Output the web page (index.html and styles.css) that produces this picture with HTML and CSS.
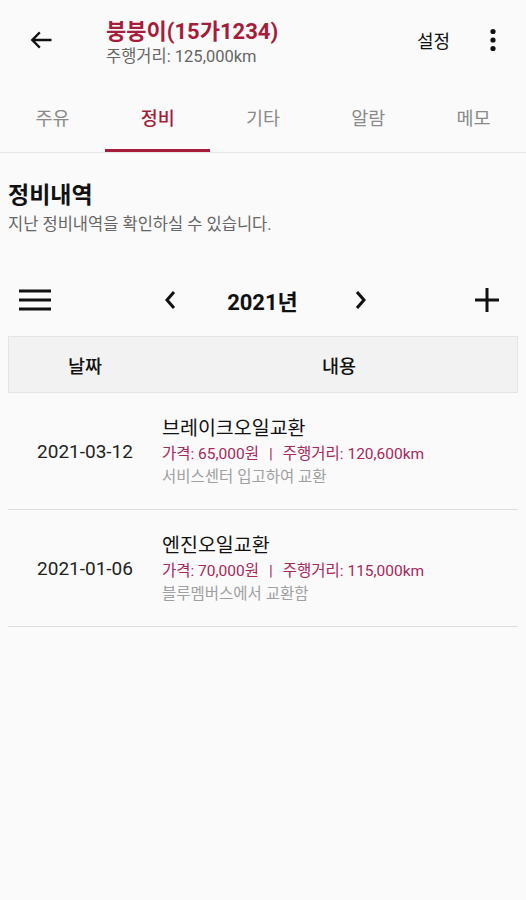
FILE: index.html
```html
<!DOCTYPE html>
<html>
<head>
    <title>정비</title>
    <meta charset="utf-8" />
    <link rel="stylesheet" href="styles.css">
</head>
<body>
    <div class="topbar">
        <div class="back">
            <svg width="28" height="28" viewBox="0 0 24 24"><path d="M21 12H4.5M11 5.5L4.5 12l6.5 6.5" fill="none" stroke="#111" stroke-width="2"/></svg>
        </div>
        <div class="car">
            <div class="car-name">붕붕이(15가1234)</div>
            <div class="car-dist">주행거리: 125,000km</div>
        </div>
        <div class="setting">설정</div>
        <div class="more">
            <svg width="8" height="24" viewBox="0 0 8 24"><circle cx="4" cy="3.5" r="2.6" fill="#111"/><circle cx="4" cy="12" r="2.6" fill="#111"/><circle cx="4" cy="20.5" r="2.6" fill="#111"/></svg>
        </div>
    </div>

    <div class="tabs">
        <div class="tab">주유</div>
        <div class="tab active">정비</div>
        <div class="tab">기타</div>
        <div class="tab">알람</div>
        <div class="tab">메모</div>
    </div>

    <div class="section">
        <div class="section-title">정비내역</div>
        <div class="section-desc">지난 정비내역을 확인하실 수 있습니다.</div>
    </div>

    <div class="toolbar">
        <div class="menu">
            <svg width="32" height="24" viewBox="0 0 32 24"><path d="M0 3h32M0 12h32M0 21h32" stroke="#111" stroke-width="3"/></svg>
        </div>
        <div class="year">
            <svg class="prev" width="14" height="22" viewBox="0 0 14 22"><path d="M11 3L4 11l7 8" fill="none" stroke="#111" stroke-width="3"/></svg>
            <span class="year-text">2021년</span>
            <svg class="next" width="14" height="22" viewBox="0 0 14 22"><path d="M3 3l7 8-7 8" fill="none" stroke="#111" stroke-width="3"/></svg>
        </div>
        <div class="add">
            <svg width="26" height="26" viewBox="0 0 26 26"><path d="M13 1v24M1 13h24" stroke="#111" stroke-width="3"/></svg>
        </div>
    </div>

    <div class="list">
        <div class="list-head">
            <div class="col-date">날짜</div>
            <div class="col-body">내용</div>
        </div>
        <div class="row">
            <div class="col-date">2021-03-12</div>
            <div class="col-body">
                <div class="item-title">브레이크오일교환</div>
                <div class="item-info">가격: 65,000원<span class="sep">|</span>주행거리: 120,600km</div>
                <div class="item-note">서비스센터 입고하여 교환</div>
            </div>
        </div>
        <div class="row">
            <div class="col-date">2021-01-06</div>
            <div class="col-body">
                <div class="item-title">엔진오일교환</div>
                <div class="item-info">가격: 70,000원<span class="sep">|</span>주행거리: 115,000km</div>
                <div class="item-note">블루멤버스에서 교환함</div>
            </div>
        </div>
    </div>
</body>
</html>
```

FILE: styles.css
```css
html, body {
    margin: 0;
    padding: 0;
}

body {
    background-color: #fafafa;
    font-family: Roboto, "Noto Sans CJK KR", sans-serif;
    color: #111;
    height: 900px;
    overflow: hidden;
}

.topbar {
    display: flex;
    align-items: center;
    height: 80px;
}

.back {
    width: 106px;
    padding-left: 27px;
    box-sizing: border-box;
    display: flex;
    align-items: center;
}

.car {
    flex: 1;
    margin-top: 6px;
}

.car-name {
    color: #a51d3a;
    font-size: 22px;
    font-weight: bold;
    line-height: 28px;
}

.car-dist {
    color: #666;
    font-size: 16.5px;
    line-height: 22px;
}

.setting {
    font-size: 18px;
    margin-right: 39px;
}

.more {
    margin-right: 29px;
    display: flex;
}

.tabs {
    display: flex;
    height: 72px;
    border-bottom: 1px solid #e6e6e6;
}

.tab {
    flex: 1;
    display: flex;
    align-items: center;
    justify-content: center;
    font-size: 18.5px;
    color: #8a8a8a;
    border-bottom: 3px solid transparent;
    padding-top: 4px;
}

.tab.active {
    color: #a51d3a;
    font-weight: 500;
    border-bottom-color: #a51d3a;
}

.section {
    padding: 28px 8px 0;
}

.section-title {
    font-size: 23px;
    font-weight: bold;
    line-height: 30px;
}

.section-desc {
    font-size: 16.5px;
    color: #666;
    line-height: 22px;
    margin-top: 3px;
}

.toolbar {
    display: flex;
    align-items: center;
    justify-content: space-between;
    height: 56px;
    margin-top: 36px;
    margin-bottom: 8px;
    padding: 0 26px 0 19px;
}

.menu, .add {
    display: flex;
}

.year {
    display: flex;
    align-items: center;
    margin-left: 6px;
}

.year .prev {
    margin-right: 50px;
}

.year .next {
    margin-left: 56px;
}

.year-text {
    font-size: 22px;
    font-weight: bold;
}

.list {
    margin: 0 8px;
}

.list-head {
    display: flex;
    align-items: center;
    height: 55px;
    background-color: #f2f2f2;
    border: 1px solid #e4e4e4;
    font-size: 18.5px;
    font-weight: 500;
}

.list-head .col-body {
    text-align: center;
}

.col-date {
    width: 152px;
    text-align: center;
    flex-shrink: 0;
}

.col-body {
    flex: 1;
}

.row {
    display: flex;
    align-items: center;
    height: 116px;
    border-bottom: 1px solid #dedede;
}

.row .col-date {
    font-size: 19px;
    color: #222;
    padding-left: 1px;
}

.row .col-body {
    padding-left: 1px;
    margin-top: 1px;
}

.item-title {
    font-size: 19.5px;
    line-height: 28px;
}

.item-info {
    font-size: 15.5px;
    color: #a8285a;
    line-height: 23px;
}

.sep {
    margin: 0 10px;
}

.item-note {
    font-size: 15.5px;
    color: #a0a0a0;
    line-height: 22px;
}
```
